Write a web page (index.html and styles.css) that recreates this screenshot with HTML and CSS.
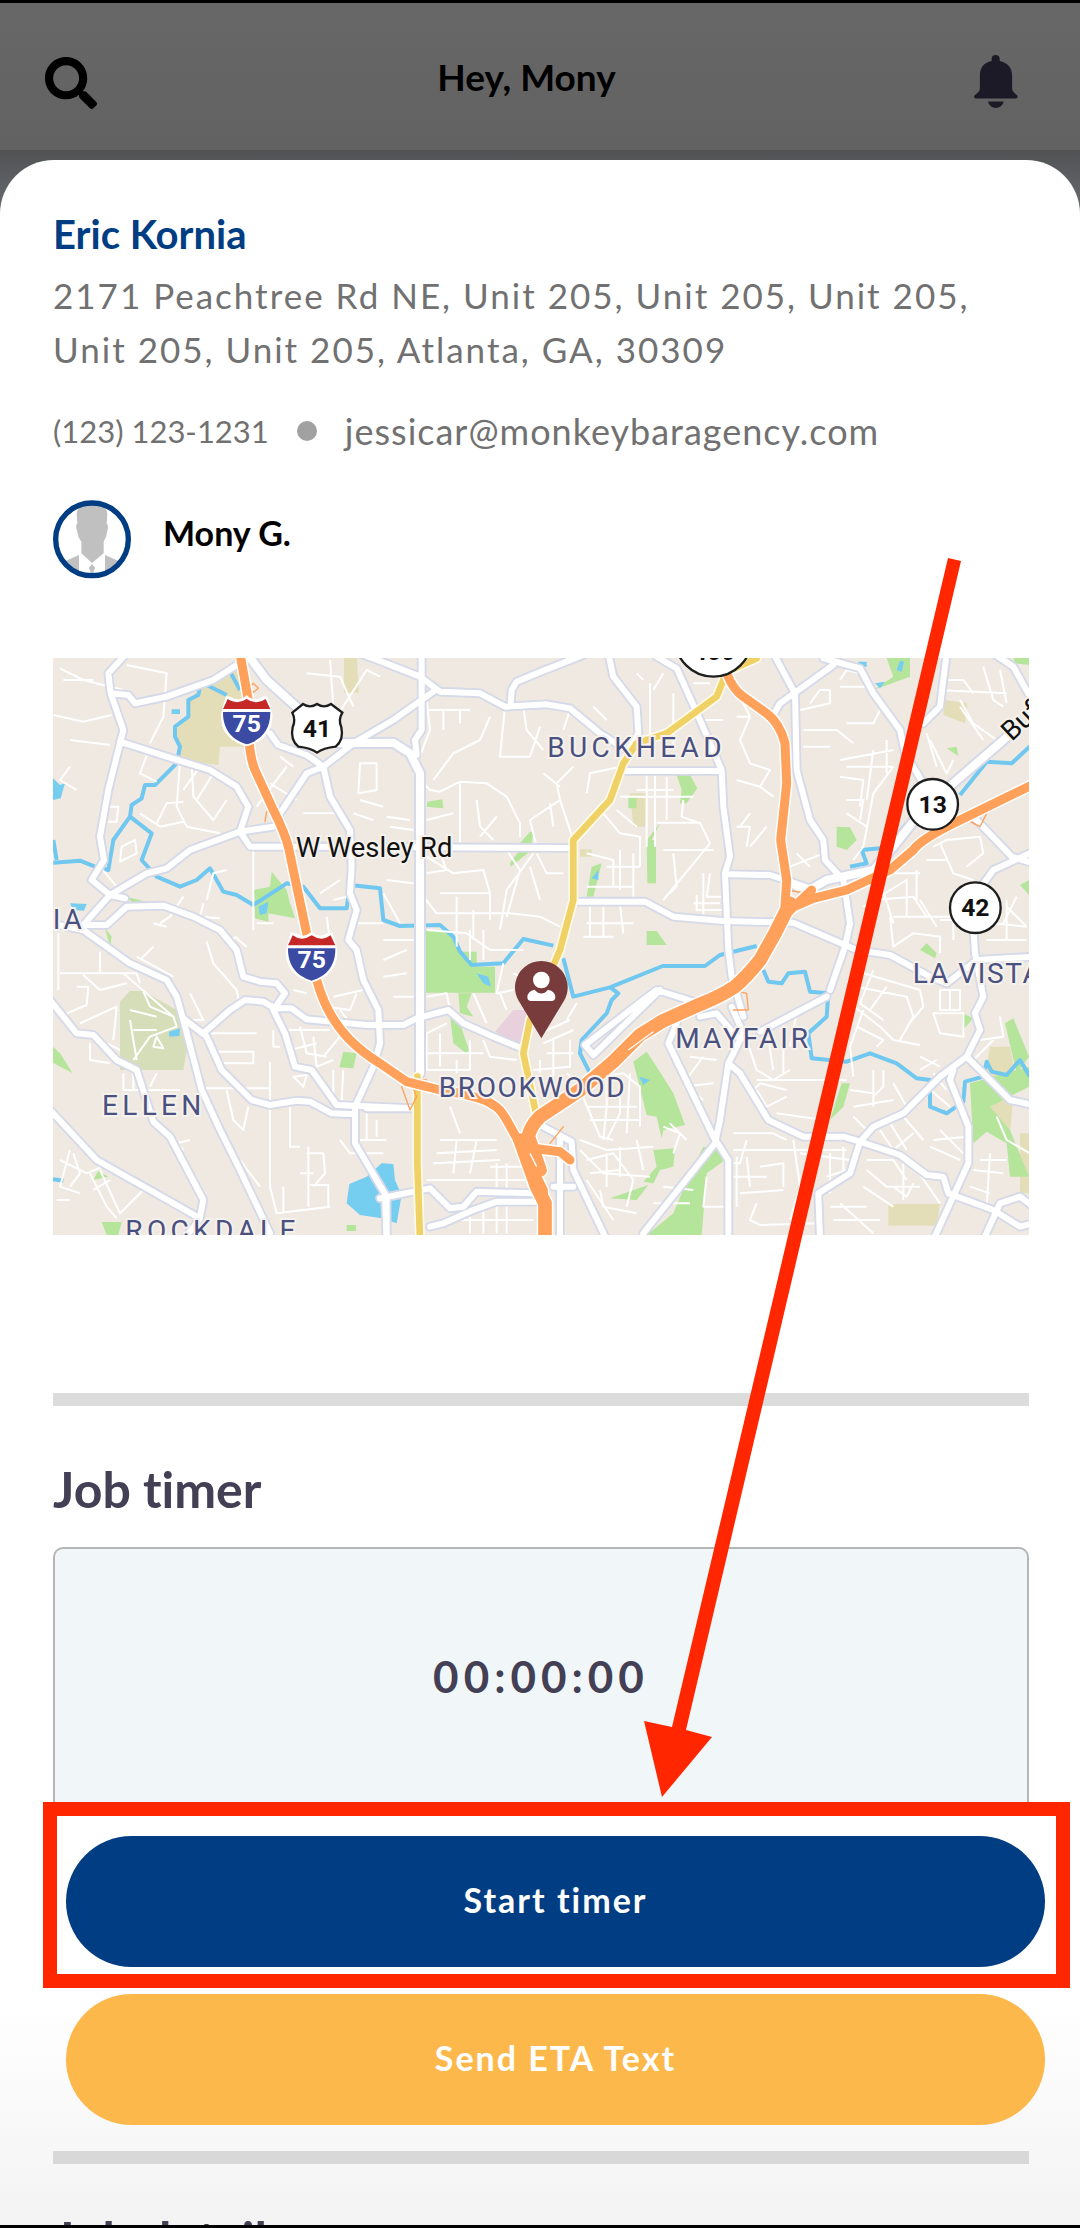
FILE: index.html
```
<!DOCTYPE html>
<html lang="en">
<head>
<meta charset="utf-8">
<meta name="viewport" content="width=device-width, initial-scale=1">
<title>Job details</title>
<link rel="stylesheet" href="styles.css">
</head>
<body>
<div class="screen">
  <header class="topbar">
    <button class="icon-button" type="button" aria-label="Search">
      <svg class="icon-search" viewBox="0 0 512 512" aria-hidden="true"><path d="M505 442.7L405.3 343c-4.5-4.5-10.6-7-17-7H372c27.6-35.3 44-79.7 44-128C416 93.1 322.9 0 208 0S0 93.1 0 208s93.1 208 208 208c48.3 0 92.7-16.4 128-44v16.3c0 6.4 2.5 12.5 7 17l99.7 99.7c9.4 9.4 24.6 9.4 33.9 0l28.3-28.3c9.4-9.4 9.4-24.6.1-34zM208 336c-70.7 0-128-57.2-128-128 0-70.7 57.2-128 128-128 70.7 0 128 57.2 128 128 0 70.7-57.2 128-128 128z"/></svg>
    </button>
    <h1 class="greeting">Hey, Mony</h1>
    <button class="icon-button" type="button" aria-label="Notifications">
      <svg class="icon-bell" viewBox="72 47 130 164" aria-hidden="true"><path d="M124 65V59a12 12 0 0 1 24 0v6C172 70 185 85 185 108V146C185 154 191 160 199 166Q202 169 201 173Q200 177 195 177H78Q73 177 72 173Q71 169 74 166C83 160 89 154 89 146V108C89 85 100 70 124 65ZM113 186H160A24 24 0 0 1 113 186Z"/></svg>
    </button>
  </header>

  <main class="sheet">
    <section class="contact">
      <h2 class="client">Eric Kornia</h2>
      <p class="address">2171 Peachtree Rd NE, Unit 205, Unit 205, Unit 205, Unit 205, Unit 205, Atlanta, GA, 30309</p>
      <div class="reach">
        <a class="phone" href="tel:1231231231">(123) 123-1231</a>
        <span class="dot"></span>
        <a class="email" href="mailto:jessicar@monkeybaragency.com">jessicar@monkeybaragency.com</a>
      </div>
      <div class="assignee">
        <svg class="avatar" viewBox="39 30 234 237" aria-hidden="true">
          <clipPath id="face"><circle cx="156" cy="148" r="104"/></clipPath>
          <circle cx="156" cy="148" r="109" fill="#fff"/>
          <g clip-path="url(#face)" fill="#c0c0c0">
            <path d="M110 72Q112 42 156 42T202 72L200 100Q207 108 202 122Q200 140 191 155V190L156 219L124 190V155Q113 140 111 122Q105 108 112 100ZM117 195V260H50V225ZM195 195V260H262V225ZM156 222l10 12-6 10 5 20h-18l5-20-6-10Z"/>
          </g>
          <circle cx="156" cy="148" r="109" fill="none" stroke="#003d82" stroke-width="16"/>
        </svg>
        <span class="assignee-name">Mony G.</span>
      </div>
    </section>

    <svg class="map" viewBox="39 54 2928 1731" role="img" aria-label="Map of the job location">
      <defs>
        <g id="major">
          <path d="M260 40L205 100 212 160 250 270 240 310 205 450 180 590 192 660 155 720 210 765 255 775M212 160L265 165 285 190 380 170 520 120 590 75M240 305L380 350 510 390 590 440 625 500 600 575 630 620 760 620 1600 624M700 560L600 575 450 630 380 685 320 700 210 765 130 855 200 855 260 800 370 797 460 830 540 870 590 930 610 1010 660 1025 710 1030 735 1060 700 1110 735 1180 765 1280 815 1290 890 1395 1120 1405M30 850L130 870 270 970 380 1020 410 1070 430 1140 485 1350 540 1470 600 1590 690 1780"/>
          <path d="M690 280L715 315 800 345 850 380 870 470 930 570 935 680 930 760 950 810 925 900 950 930 970 1020 1015 1110 1020 1210 1000 1280 945 1400 945 1510 1040 1670 1040 1800M720 520L800 400 850 380 940 310 1060 240 1180 155M840 0L1000 55 1140 110 1200 155 1320 160 1395 200 1520 193 1590 205 1680 280 1760 330M1145 40V270L1125 300 1130 345M1630 45L1490 100 1430 125 1415 150 1412 190"/>
          <path d="M1705 40L1720 110 1790 200 1795 280 1770 320M1850 50L1910 85 1980 240 2045 390 2050 500 2070 650 2055 700 2065 930 2075 1010 2110 1130M1760 393H2040M1610 785H1815L1900 830 2050 843 2260 848 2450 930 2550 945 2670 1010 2720 1030 2810 960 2980 950"/>
          <path d="M2200 40L2265 160 2270 390 2310 540 2350 600 2355 660 2410 720 2430 850 2415 920 2370 1050M2350 55L2460 85 2500 160 2580 270 2595 340 2650 430M2380 75L2220 190 2200 225M2720 40L2700 200 2650 250M2070 703L2190 705 2310 745M2800 530L2915 650 2980 670M2810 760L2860 690 2980 635M2800 860L2805 940 2830 1070 2805 1120 2820 1170 2780 1250M2860 40L2920 80 2970 170"/>
          <path d="M490 1180L570 1110 615 1080 670 1085 705 1105 755 1105 800 1138 980 1155 1090 1155 1130 1135 1225 1110 1270 1150 1360 1190 1445 1225M430 1135L500 1190 545 1290 635 1380 690 1395 770 1382 810 1385 875 1420 945 1423M30 1080L110 1180 160 1185 230 1260 290 1290 340 1445 390 1490 490 1680 480 1730M30 1410L170 1560 480 1735 430 1800"/>
          <path d="M980 1405H1120M1020 1675L1120 1655 1170 1645 1230 1705 1270 1700 1310 1655 1480 1660M1170 1760L1210 1750 1300 1710 1370 1685 1490 1685M1035 1670L1040 1800M1510 1460L1595 1505 1600 1590 1700 1800M1560 1500V1785M1540 1640H1600M1635 1215L1810 1080 1850 1050 1960 1085M1635 1215L1660 1245 1860 1050M1910 1150L1885 1210 2020 1490 2065 1560V1800M1810 1780L2025 1510 2040 1440 2065 1270 2110 1180 2075 1100M1980 1130L2030 1120 2090 1190M2160 1175L2360 1070M2065 1270L2100 1300 2185 1440 2290 1490 2410 1490 2460 1505 2580 1545 2660 1605 2710 1610 2725 1660 2860 1710 2940 1760 2980 1750"/>
          <path d="M2460 1505L2430 1600 2335 1660 2340 1800M2460 1505L2500 1460 2590 1420 2700 1310 2780 1250 2910 1380 2980 1395M2740 1290L2730 1320 2785 1460V1570L2680 1800M2830 1800L2880 1690 2940 1670 2980 1700"/>
        </g>
        <g id="trunk">
          <path d="M620 40L680 120 780 210M900 310L1060 308 1110 340 1140 400V1300M2925 270L2740 430 2640 520 2560 620 2500 690 2360 720 2300 755 2230 715"/>
        </g>
        <g id="yellow">
          <path d="M2150 55L2060 95 2030 170 1880 280 1790 310 1750 370 1710 480 1600 600V780L1560 930 1470 1140 1450 1240 1490 1430M1132 1310V1570L1140 1800"/>
        </g>
        <g id="freeway">
          <path d="M598 30L625 180Q620 330 645 390L700 510Q735 580 745 620L800 880 830 1020Q860 1130 930 1200Q970 1240 1020 1270L1100 1325 1200 1350Q1330 1370 1360 1395Q1380 1405 1400 1440L1450 1530 1510 1650 1515 1800M2060 100Q2080 150 2110 170L2180 220Q2220 250 2235 310L2240 430 2222 600 2240 720 2235 800M2990 428L2740 550Q2640 600 2620 630L2550 690 2420 750 2320 775 2240 810M1480 1525L1560 1535 1590 1560M2230 830L2315 750"/>
        </g>
        <g id="freeway-wide">
          <path d="M2250 790L2205 880 2160 960Q2120 1010 2085 1040Q2040 1070 1980 1093L1870 1142 1800 1185 1720 1265 1620 1350 1500 1430Q1470 1460 1465 1490L1500 1590M1440 1500L1490 1640 1515 1690V1800"/>
        </g>
        <g id="interstate">
          <path d="M0 77C-44 64-80 37-77-20Q-72-44-62-74L-48-72Q-22-54 0-77Q22-54 48-72L62-74Q72-44 77-20C80 37 44 64 0 77Z" fill="#fff"/>
          <path d="M-71-35Q-66-45-57-65Q-30-45 0-65Q30-45 57-65Q66-45 71-35Z" fill="#c62828"/>
          <path d="M-71-26H71C72 30 40 60 0 71C-40 60-72 30-71-26Z" fill="#3b4ba3"/>
          <text class="shield-text light" x="0" y="34">75</text>
        </g>
      </defs>

      <rect x="39" y="54" width="2928" height="1731" fill="#efe9e1"/>

      <g fill="#e4deb8">
        <path d="M480 140L590 90 640 320 540 320 535 375 415 360 420 320 405 275 445 220 450 180ZM912 40H950L957 158H912ZM1770 460H1818L1815 560 1780 560ZM1620 628H1655V650H1620ZM2715 180L2782 190 2775 250 2710 225ZM2545 1692H2700L2690 1757H2545ZM2850 1220H2910L2930 1330 2830 1330ZM2830 1370H2920L2910 1480 2860 1450ZM2940 1480H2980V1660H2940Z"/>
      </g>
      <path d="M240 1085L270 1053H310L410 1110 440 1230 430 1290H240Z" fill="#d5deb8"/>
      <path d="M1365 1175L1420 1110H1460L1450 1200 1430 1210Z" fill="#e8d1dc"/>
      <g fill="#b5e49b">
        <path d="M642 750L690 740 695 695 740 750 750 790 765 835 685 820V845L645 835ZM258 770L330 788 290 798ZM195 865L215 890 210 920ZM1150 870L1220 870 1260 935H1310V980H1365V1058H1150ZM1910 405H1950L1972 445 1940 490H1920L1925 450ZM1765 470H1790V505H1765ZM1162 485L1207 478 1210 505 1160 500ZM1470 575H1480L1475 610H1440ZM1440 630L1475 630 1412 680 1410 668ZM1820 600H1848V730H1822ZM1820 600L1860 550 1830 610ZM1820 873H1850L1880 915H1820ZM1655 680L1685 670 1660 770H1640Z"/>
        <path d="M2540 54H2610V110L2500 150 2560 110ZM2390 560L2430 562 2450 600 2420 630 2390 620ZM2720 325L2750 320 2755 348ZM2920 54H2967V75L2925 70ZM2940 735L2967 720V765ZM2640 930L2660 910 2690 940 2685 955ZM2765 1118L2800 1135 2768 1170ZM2895 1150L2920 1135 2967 1250 2930 1300ZM2790 1330L2860 1310 2967 1280V1340L2850 1400 2910 1470 2967 1610 2910 1610 2900 1510 2840 1475 2800 1510ZM2405 1330L2430 1330 2410 1400 2370 1440Z"/>
        <path d="M39 1220L60 1240 98 1300 39 1268ZM160 1620L175 1592 205 1610ZM185 1746H245L235 1785H200ZM920 1755H948V1773H920ZM898 1282L910 1235 950 1240 940 1285ZM1255 1060H1295L1280 1100 1300 1130 1260 1120ZM1230 1125L1260 1150 1285 1225 1285 1245 1240 1210ZM1780 1265L1820 1235 1850 1280 1900 1360 1935 1455 1870 1470 1865 1495 1850 1430 1820 1425ZM1840 1530L1905 1525 1900 1580 1860 1590 1840 1630 1810 1625 1850 1580ZM1710 1675L1825 1635 1790 1680ZM1950 1600L1990 1520 2048 1530V1565L2000 1600 1985 1785H1820L1900 1720Z"/>
      </g>
      <g fill="#75cdf0">
        <path d="M39 415L60 435 75 430 62 475 39 480ZM395 208H420V222H395ZM90 790L140 792 132 812 100 810ZM655 800L685 785 680 820 660 825ZM387 1175L420 1165 418 1188 388 1190ZM920 1690L928 1632 980 1610 1025 1570 1060 1572 1065 1620 1085 1665 1070 1750 1025 1735 960 1725ZM1310 1000L1345 1010 1353 1040 1330 1030ZM2455 65H2480V80H2455ZM2505 130L2535 125 2520 145ZM2570 90L2580 62 2592 65 2585 95ZM1655 715L1675 690V720ZM1798 1310L1830 1320 1810 1335Z"/>
      </g>

      <g class="water">
        <path d="M480 140L475 165 445 180 445 230 405 260 405 290 420 320 410 370 345 435 315 435 305 475 275 495 270 530 220 600 205 690 165 680 120 662 40 668M40 600L50 660M270 530L335 580 305 660 350 710 420 740 470 720 510 685 550 755 590 765 640 795 740 730 790 740 840 805 920 805 930 735 1020 745 1030 840 1080 858 1200 855 1240 890 1260 935 1295 975 1390 970 1450 897 1540 917M500 135L560 165M570 95L600 150"/>
        <path d="M1570 955L1600 1070 1710 1042 1868 978H1995L2040 945 2150 918M1710 1042L1735 1060 1715 1080 1700 1120 1625 1200 1620 1240 1650 1300M2170 990L2185 1025 2225 1030 2245 1000 2295 995 2310 1055 2365 1060 2360 1130 2305 1180 2315 1255 2420 1265 2490 1240 2570 1270 2630 1315 2670 1320V1400L2720 1420 2770 1385 2775 1325 2830 1310 2840 1265 2855 1295 2900 1305 2940 1260 2970 1310M2760 465L2840 365 2915 370 2980 310M2600 550L2560 600M2430 680L2480 670 2465 630 2520 625M39 1618L70 1622"/>
      </g>

      <g class="minor">
        <path d="M60 85L130 120 250 150M260 75L380 100 370 230 330 310M70 120H160M40 225L130 245 215 225M90 300L210 315M90 380L60 420 110 450M210 500H235L230 545H205M245 620L285 600 290 640 240 665ZM330 320L300 400 350 425M420 365L410 500 440 560 540 580M455 370L460 470 520 540 560 480M350 550L380 490 430 485M430 450L480 380M520 400L470 480M300 520L360 560 430 545M500 780L520 700 560 690M490 790L480 830 540 835M430 770L390 830 360 850M340 850L380 860M180 680L230 740M55 880V1050M60 1000H290L300 1030M180 935V1000M130 1005L180 1050 260 1030M250 1000L400 1130"/>
        <path d="M660 420L620 370 630 320M720 350L760 380M690 430L770 480M650 500L740 380M870 60L880 200M800 100L900 110 940 200M890 230L980 90 1020 110M960 370H1010V450L955 460ZM790 520H900M1030 500L960 480M1000 540L940 520M640 630V870M700 850L650 850M840 760L900 720M860 830L870 900M950 850H1030M880 780L920 770"/>
        <path d="M300 960L340 920M290 950L400 1010M500 905L520 970 590 1050 600 1100M590 895L620 920M450 1060L490 1140H440M310 1055L330 1100 400 1130 410 1160 330 1190 280 1260M270 1110L350 1130M280 1170L350 1170M290 1260L270 1140M340 1220L370 1225 350 1190ZM110 1040H145L140 1095 80 1120M120 1150L230 1100 220 1200M160 1190L240 1230M150 1210V1260L210 1270M250 1300V1350H420M280 1300V1350M350 1300L330 1340M500 1180H650M520 1235H640V1270H530M690 1265V1640M490 1345H690M560 1350L580 1440 610 1470 625 1400M750 1400V1520H780M690 1640L710 1720 870 1700M805 1520V1700M800 1540H850L855 1600 820 1640M810 1635H865V1700M780 1600H820M730 1720V1640"/>
        <path d="M60 1560L140 1600 210 1570M90 1530L60 1640 120 1660M100 1540L120 1600 90 1640M150 1600L200 1700 230 1735M180 1590L240 1720 310 1650M210 1620L160 1650M50 1680H90M400 1500L430 1530M410 1510L450 1500M600 1560L660 1640M560 910L590 890M880 1290V1370M910 1290L905 1380M740 1170L870 1170M780 1160L800 1240 860 1250M820 1190L830 1280 880 1260M750 1230L830 1210M760 1310L800 1305 790 1340ZM700 1170V1220H720M860 1100L930 1110 950 1060M880 1070L970 1050M900 1110L940 1160M850 1250L900 1190M760 1050L800 1060M960 1500H1040M900 1500L930 1540H1030M980 1420V1500M1010 1440V1490"/>
        <path d="M1160 180L1170 270 1120 400 1170 450 1200 455 1260 425 1340 430 1400 470 1440 550 1440 590M1160 210H1290M1210 210V270M1260 210V250M1350 230L1320 300 1240 340 1180 420M1395 200L1380 350H1470L1500 260M1450 200L1460 270 1510 330M1590 210L1570 270M1560 480L1550 430 1600 380M1560 480L1470 540 1490 620M1560 480L1600 600M1530 490L1540 560M1320 590L1370 530M1310 480L1320 560 1360 600M1260 430V620M1160 540L1240 520M1510 400L1560 440M1640 460L1650 400 1740 380M1660 200L1700 240M1830 130V300M1790 100L1810 120M1870 100L1840 150M1900 160V320M1960 130H2010M1980 240H2050"/>
        <path d="M1820 400V620M1845 400V620M1880 410V540M1740 470H1960M1790 450H1900M1730 510L1790 560M1690 520L1740 580 1800 590 1800 680M1930 480L1925 530 1980 550M1850 548H1980L2010 610M1640 640L1720 660V740M1700 680H1800M1740 630V750M1780 640V770M1640 740H1780M2010 610L1870 780M1870 630H2020M1900 640L1910 740 1890 760M1650 785V890M1690 800V890M1740 790L1750 880M1640 850H1780M1630 890H1720M1970 765V810H2050M1990 700V830M2010 700L2000 770H2060M1960 790H2040"/>
        <path d="M1150 770L1190 820H1410L1500 830 1560 860M1200 760H1350V840M1250 770V920M1300 810V900M1400 630L1440 690 1420 760 1400 830M1470 680L1500 780M1490 640L1520 700H1570M1480 640L1400 750 1380 870M1160 650L1240 700 1330 690 1350 760M1160 700L1220 690 1200 640M1030 760L1080 850M1040 720L1120 730M1160 870L1280 880 1350 930H1450M1290 870V960M1330 870V960M1050 560L1120 570M1040 530L1110 540"/>
        <path d="M2100 170L2130 230 2100 300 2130 370 2190 390 2160 440 2200 470M2090 230H2130M2090 420L2160 440M2280 210L2370 190V150H2340L2310 190M2290 270H2390L2440 310M2290 320H2370M2400 120L2420 90 2460 100M2400 140L2480 140M2420 250H2500L2520 210M2400 360L2560 330M2420 380H2560M2400 410L2470 420 2460 500M2420 480H2470L2460 540M2540 300V400M2500 330L2480 480M2420 520L2480 560M2560 380L2500 460 2470 620 2440 660M2670 300L2720 400 2740 360M2700 120H2770L2800 160M2690 150L2900 160M2830 80L2860 180 2890 200M2880 90L2900 190M2760 180L2800 250 2870 300M2760 200L2830 300M2660 280L2690 380"/>
        <path d="M2100 560L2130 520M2130 620L2180 560M2090 560H2130L2120 620M2270 640L2310 680M2250 680L2350 640M2560 700H2640M2500 780L2620 770 2660 830M2470 800L2600 720V830M2520 720L2560 850M2630 690V780M2560 830H2740M2680 620L2720 600 2820 590 2830 640 2780 680M2700 610L2740 700 2800 720M2660 660H2720M2550 830L2560 920 2620 880 2700 890V940M2640 780L2690 860M2900 800L2960 860M2860 850L2960 860M2900 780V900M2930 770L2890 850M2700 840H2740V900M2840 900H2960"/>
        <path d="M1030 900H1120M1030 960L1100 930M1030 1010L1100 1000M1060 1070H1120M1160 1070L1220 1060 1230 1110M1390 970L1370 1060 1420 1050M1420 1000L1470 1020M1380 1060L1400 1110M1300 1060L1340 1150M1330 1200L1350 1250 1430 1260M1220 1150L1160 1180V1290H1290V1200M1200 1180V1280M1160 1240H1330M1250 1260V1300M1500 1180L1590 1140M1510 1210L1600 1170M1520 1240H1600M1480 1290L1590 1280V1200M1500 1260V1300M1540 1200V1310M1610 1090L1580 1140M1580 1300L1620 1330M1230 1400L1260 1480M1200 1500H1370M1190 1540L1370 1530M1180 1570L1380 1560M1250 1500L1240 1600M1310 1500L1290 1600M1350 1580H1460M1370 1570V1650M1400 1570V1650M1160 1620H1460M1290 1710V1780M1330 1700V1780M1370 1690V1780M1400 1690V1780M1240 1740H1480"/>
        <path d="M1620 1350L1680 1490 1720 1500M1680 1310L1750 1300 1800 1340V1460M1640 1400H1790M1650 1440H1800M1700 1320V1400L1690 1500M1740 1320V1420L1700 1500M1770 1300L1760 1480M1620 1500L1700 1530 1840 1520M1620 1530L1690 1600 1830 1610M1640 1560L1720 1540 1780 1620 1760 1700M1650 1600L1740 1590M1680 1650L1690 1700 1790 1720M1640 1620L1720 1740M1700 1540V1640M1740 1520V1610M1790 1500L1810 1590M1870 1460L1920 1480 1900 1540M1890 1450L1940 1500M1990 1250L1930 1330 1990 1380M1950 1250L2030 1260M1930 1340L2020 1330M1870 1640L1960 1650M1840 1690H1950M1950 1600L1900 1680M2000 1610L1990 1700H2060"/>
        <path d="M2110 1310L2130 1360 2160 1330 2240 1350M2150 1350L2180 1400 2240 1370M2120 1200L2150 1290 2200 1320 2250 1290M2180 1170L2200 1290M2230 1140V1300M2270 1120L2250 1220M2150 1320L2420 1320M2210 1420L2350 1440M2080 1480H2200L2240 1500M2080 1530H2420M2120 1500L2100 1570H2080M2090 1550V1700M2120 1550L2130 1640M2260 1500L2280 1640 2250 1740M2160 1580L2230 1570V1640M2100 1660L2230 1650M2150 1690L2130 1740 2160 1755 2330 1750M2080 1610H2180M2360 1610L2420 1590M2370 1540V1660M2410 1520V1600M2280 1540L2430 1560M2380 1740H2520M2400 1690L2500 1780M2370 1700H2480"/>
        <path d="M2430 1090L2520 1160 2560 1200 2640 1215M2450 1040L2600 1070 2620 1130 2580 1200M2470 1000L2640 1050 2650 1100 2600 1160M2470 1110L2430 1220 2440 1310M2500 990L2460 1090 2530 1140M2540 1040L2490 1110M2450 1160L2530 1200 2510 1220M2700 1050H2760V1110H2700ZM2730 1050V1110M2680 1120H2770V1190L2700 1180ZM2640 1250L2700 1280M2640 1290L2690 1260M2500 1290V1400M2530 1290V1340L2500 1370M2430 1350L2500 1360M2440 1400L2560 1380M2560 1330L2600 1400M2440 1430L2480 1470M2520 1470L2560 1530 2620 1480M2550 1450L2600 1530M2590 1430L2650 1500M2700 1470L2770 1540M2680 1500L2780 1490M2670 1520L2760 1560M2480 1560H2560L2600 1620M2480 1590L2540 1640 2640 1640M2470 1640L2560 1700M2590 1560V1680M2610 1560L2700 1690M2560 1640L2600 1670 2620 1630M2820 1560L2900 1560M2800 1590L2890 1600M2790 1640L2850 1660M2850 1540L2840 1700M2870 1430L2900 1500 2970 1540M2860 1200L2800 1260M2820 1200L2890 1190 2880 1130M2660 1340L2730 1400M2680 1300L2720 1350"/>
      </g>

      <g class="road casing"><use href="#major"/></g>
      <g class="road trunk-casing"><use href="#trunk"/></g>
      <g class="road surface"><use href="#major"/></g>
      <g class="road trunk-surface"><use href="#trunk"/></g>
      <g class="road yellow-casing"><use href="#yellow"/></g>
      <g class="road yellow-surface"><use href="#yellow"/></g>
      <g class="road ramp"><path d="M620 150L640 130 655 145 630 165M675 545L680 515 700 500 720 515M1085 1340L1110 1410 1130 1370 1110 1320 1160 1320M2080 1110L2125 1110 2120 1060 2080 1050M2760 530L2820 560 2840 520M2235 750L2310 760M1530 1510L1570 1460"/></g>
      <g class="road freeway-casing"><use href="#freeway"/></g>
      <g class="road wide-casing"><use href="#freeway-wide"/></g>
      <g class="road freeway-surface"><use href="#freeway"/></g>
      <g class="road wide-surface"><use href="#freeway-wide"/></g>
      <path class="median" d="M1765 1230L1840 1175M1470 1540L1490 1580"/>

      <g class="place">
        <text class="wide" x="1522" y="352">BUCKHEAD</text>
        <text x="38" y="866">IA</text>
        <text class="wide" x="186" y="1426">ELLEN</text>
        <text class="wide" x="256" y="1799">ROCKDALE</text>
        <text class="tight" x="1196" y="1372">BROOKWOOD</text>
        <text x="1906" y="1224">MAYFAIR</text>
        <text class="tight" x="2618" y="1028">LA VISTA</text>
      </g>
      <text class="street" x="768" y="650">W Wesley Rd</text>
      <text class="street" transform="translate(2915 306) rotate(-43)">Buford</text>

      <use href="#interstate" x="620" y="242"/>
      <use href="#interstate" x="815" y="951"/>
      <path d="M757 218L789 192Q810 206 831 192Q852 206 873 192L907 218Q894 240 904 262Q912 300 887 320Q850 324 831 338Q812 324 775 320Q750 300 758 262Q768 240 757 218Z" fill="#fff" stroke="#1d1d1d" stroke-width="7"/>
      <text class="shield-text" x="831" y="292">41</text>
      <g fill="#fff" stroke="#1d1d1d" stroke-width="7">
        <circle cx="2020" cy="-5" r="115"/>
        <circle cx="2678" cy="493" r="76"/>
        <circle cx="2806" cy="803" r="76"/>
      </g>
      <text class="shield-text" x="2022" y="60">400</text>
      <text class="shield-text" x="2678" y="518">13</text>
      <text class="shield-text" x="2806" y="828">42</text>

      <path d="M1504 1195L1436 1082A79 79 0 1 1 1572 1082Z" fill="#783c3c"/>
      <circle cx="1504" cy="1020" r="25" fill="#fff"/>
      <path d="M1484 1049Q1504 1072 1524 1049Q1546 1054 1546 1072Q1546 1083 1534 1083H1474Q1462 1083 1462 1072Q1462 1054 1484 1049Z" fill="#fff"/>
    </svg>

    <hr class="divider">

    <section class="timer">
      <h2 class="section-title">Job timer</h2>
      <div class="timer-card"><time class="clock">00:00:00</time></div>
    </section>

    <div class="actions">
      <div class="callout"><button class="pill-button primary" type="button">Start timer</button></div>
      <button class="pill-button secondary" type="button">Send ETA Text</button>
    </div>

    <hr class="divider last">
    <h2 class="section-title next">Job details</h2>
  </main>

  <svg class="arrow" viewBox="0 0 1080 2228" aria-hidden="true">
    <path d="M948 558L961 561 686 1730 712 1737 662 1797 644 1721 672 1727Z"/>
  </svg>
</div>
</body>
</html>
```
FILE: styles.css
```
* { box-sizing: border-box; }

body {
  margin: 0;
  font-family: Lato, "Liberation Sans", sans-serif;
  font-variant-ligatures: none;
  background: #000;
}

h1, h2, p { margin: 0; }
button { font-family: inherit; cursor: pointer; }

.screen {
  position: relative;
  height: 100vh;
  overflow: hidden;
  border-top: 3px solid #000;
  border-bottom: 3px solid #000;
  background: linear-gradient(#505254 147px, #6d7073 220px);
}

/* Header */
.topbar {
  display: flex;
  align-items: center;
  justify-content: space-between;
  height: 147px;
  padding: 12px 62px 0 45px;
  background: linear-gradient(#676767, #626262);
}
.icon-button {
  display: flex;
  padding: 0;
  border: 0;
  background: none;
}
.icon-search { width: 52px; height: 52px; }
.icon-bell { width: 44px; height: 55px; fill: #1c1a26; }
.greeting {
  padding: 0 18px 12px 0;
  font-size: 37px;
  line-height: 48px;
  color: #000;
}

/* Sheet */
.sheet {
  display: flex;
  flex-direction: column;
  min-height: 100%;
  margin-top: 10px;
  border-radius: 54px 54px 0 0;
  background: linear-gradient(#fff 1840px, #f3f3f3 2065px);
}
.contact { padding: 48px 51px 0 53px; }
.client {
  font-size: 40px;
  line-height: 52px;
  color: #003d82;
}
.address {
  margin-top: 8px;
  padding-right: 32px;
  font-size: 35px;
  line-height: 54px;
  letter-spacing: 2px;
  color: #717171;
}
.reach {
  display: flex;
  align-items: center;
  margin-top: 28px;
  line-height: 54px;
}
.reach a {
  color: #717171;
  text-decoration: none;
}
.phone { font-size: 31px; }
.email { font-size: 36px; letter-spacing: 1px; }
.dot {
  width: 20px;
  height: 20px;
  margin: 0 28px;
  border-radius: 50%;
  background: #a1a1a1;
}
.assignee {
  display: flex;
  align-items: center;
  gap: 32px;
  margin-top: 42px;
}
.avatar { width: 78px; height: 79px; }
.assignee-name {
  padding-bottom: 14px;
  font-size: 34px;
  line-height: 40px;
  font-weight: 700;
}

/* Map */
.map {
  display: block;
  width: calc(100% - 104px);
  margin: 79px 51px 0 53px;
}
.minor { fill: none; stroke: #fff; stroke-width: 6; stroke-linejoin: round; }
.water { fill: none; stroke: #70c7ef; stroke-width: 12; stroke-linejoin: round; }
.road { fill: none; stroke-linejoin: round; stroke-linecap: round; }
.casing { stroke: #d5d9e8; stroke-width: 29; }
.surface { stroke: #fff; stroke-width: 18; }
.trunk-casing { stroke: #d5d9e8; stroke-width: 36; }
.trunk-surface { stroke: #fff; stroke-width: 24; }
.yellow-casing { stroke: #fffbea; stroke-width: 30; }
.yellow-surface { stroke: #f0d165; stroke-width: 20; }
.ramp { stroke: #ffa15a; stroke-width: 4; }
.freeway-casing { stroke: #fff; stroke-width: 36; }
.freeway-surface { stroke: #ffa15a; stroke-width: 27; }
.wide-casing { stroke: #fff; stroke-width: 50; }
.wide-surface { stroke: #ffa15a; stroke-width: 41; }
.median { fill: none; stroke: #fff; stroke-width: 4; }
.place {
  font-family: Roboto, sans-serif;
  font-size: 84px;
  letter-spacing: 9px;
  fill: #4a5080;
  stroke: #f5f1ec;
  stroke-width: 12px;
  paint-order: stroke;
}
.place .wide { letter-spacing: 13px; }
.place .tight { letter-spacing: 5px; }
.street {
  font-family: Roboto, sans-serif;
  font-size: 82px;
  fill: #111;
  stroke: #f5f1ec;
  stroke-width: 12px;
  paint-order: stroke;
}
.shield-text {
  font-family: Roboto, sans-serif;
  font-size: 74px;
  font-weight: 700;
  text-anchor: middle;
  fill: #111;
}
.shield-text.light { fill: #fff; }

/* Timer */
.divider {
  align-self: stretch;
  height: 13px;
  margin: 158px 51px 0 53px;
  border: 0;
  background: #dcdcdc;
}
.timer { padding: 50px 51px 0 53px; }
.section-title {
  font-size: 50px;
  line-height: 66px;
  color: #433f54;
}
.timer-card {
  display: flex;
  justify-content: center;
  margin-top: 25px;
  padding: 99px 0 97px;
  border: 2px solid #b5b5b5;
  border-bottom: 0;
  border-radius: 10px 10px 0 0;
  background: #f1f6f9;
}
.clock {
  font-size: 44px;
  line-height: 57px;
  font-weight: 700;
  letter-spacing: 5px;
  color: #433f54;
}

/* Actions */
.actions { padding: 0 10px 0 43px; }
.callout {
  padding: 20px 11px 7px 9px;
  border: 14px solid #ff2600;
}
.pill-button {
  display: block;
  width: 100%;
  height: 131px;
  padding: 0 0 4px;
  border: 0;
  border-radius: 66px;
  font-size: 34px;
  font-weight: 700;
  letter-spacing: 2px;
  color: #fff;
}
.primary { background: #003d82; }
.secondary {
  width: calc(100% - 48px);
  margin: 6px 25px 0 23px;
  background: #fdb84b;
}
.divider.last { margin-top: 26px; background: #d8d8d8; }
.section-title.next { padding: 42px 53px 0; }

.arrow {
  position: absolute;
  top: -3px;
  left: 0;
  width: 100%;
  fill: #ff2600;
  pointer-events: none;
}
```
